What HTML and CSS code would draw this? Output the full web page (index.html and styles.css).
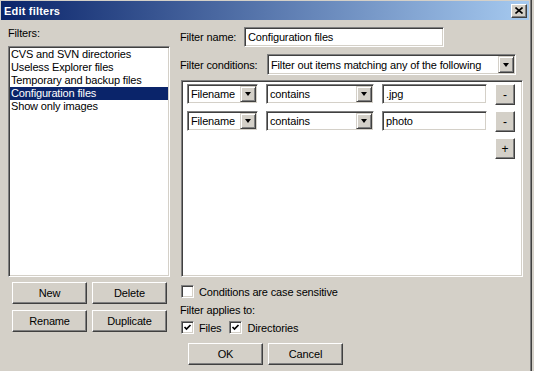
FILE: index.html
```html
<!DOCTYPE html>
<html lang="en">
<head>
  <meta charset="UTF-8" />
  <title>Edit filters</title>
  <link rel="stylesheet" href="styles.css">
</head>
<body>
  <div class="window">
    <!-- Title bar -->
    <div class="titlebar">
      <span class="title">Edit filters</span>
      <div class="close">
        <svg width="8" height="7" viewBox="0 0 8 7"><path d="M0.5 0.5 L7.5 6.5 M7.5 0.5 L0.5 6.5" stroke="#000" stroke-width="1.6"/></svg>
      </div>
    </div>

    <div class="content">
      <!-- Left column: list of filters -->
      <div class="left">
        <div class="label">Filters:</div>
        <div class="listbox">
          <div class="item">CVS and SVN directories</div>
          <div class="item">Useless Explorer files</div>
          <div class="item">Temporary and backup files</div>
          <div class="item selected">Configuration files</div>
          <div class="item">Show only images</div>
        </div>
        <div class="btn-grid">
          <div class="btn">New</div>
          <div class="btn">Delete</div>
          <div class="btn">Rename</div>
          <div class="btn">Duplicate</div>
        </div>
      </div>

      <!-- Right column: filter details -->
      <div class="right">
        <div class="form-row">
          <div class="form-label name-label">Filter name:</div>
          <div class="field name-field">Configuration files</div>
        </div>
        <div class="form-row cond-row">
          <div class="form-label cond-label">Filter conditions:</div>
          <div class="field combo cond-combo">
            <span>Filter out items matching any of the following</span>
            <div class="drop"><i></i></div>
          </div>
        </div>

        <div class="conditions">
          <div class="cond">
            <div class="field combo type-combo"><span>Filename</span><div class="drop"><i></i></div></div>
            <div class="field combo op-combo"><span>contains</span><div class="drop"><i></i></div></div>
            <div class="field value">.jpg</div>
            <div class="btn small">-</div>
          </div>
          <div class="cond">
            <div class="field combo type-combo"><span>Filename</span><div class="drop"><i></i></div></div>
            <div class="field combo op-combo"><span>contains</span><div class="drop"><i></i></div></div>
            <div class="field value">photo</div>
            <div class="btn small">-</div>
          </div>
          <div class="cond add-row">
            <div class="btn small">+</div>
          </div>
        </div>

        <div class="check-row case-row">
          <div class="checkbox"></div>
          <span>Conditions are case sensitive</span>
        </div>
        <div class="applies">Filter applies to:</div>
        <div class="check-row applies-row">
          <div class="checkbox checked">
            <svg width="9" height="9" viewBox="0 0 9 9"><path d="M1.5 4 L3.5 6 L7.5 2" fill="none" stroke="#000" stroke-width="1.7"/></svg>
          </div>
          <span>Files</span>
          <div class="checkbox checked">
            <svg width="9" height="9" viewBox="0 0 9 9"><path d="M1.5 4 L3.5 6 L7.5 2" fill="none" stroke="#000" stroke-width="1.7"/></svg>
          </div>
          <span>Directories</span>
        </div>

        <div class="dialog-buttons">
          <div class="btn">OK</div>
          <div class="btn">Cancel</div>
        </div>
      </div>
    </div>
  </div>
</body>
</html>
```

FILE: styles.css
```css
* {
  box-sizing: border-box;
}
body {
  margin: 0;
  font-family: "Liberation Sans", Arial, sans-serif;
  font-size: 11px;
  letter-spacing: -0.15px;
  color: #000;
  background-color: #d4d0c8;
  overflow: hidden;
}
/* Dialog window frame */
.window {
  width: 532px;
  height: 371px;
  padding: 1px 2px 0 1px;
  border-right: 1px solid #404040;
  box-shadow: inset -1px 0 #808080;
  background-color: #d4d0c8;
}
.titlebar {
  height: 19px;
  display: flex;
  align-items: center;
  justify-content: space-between;
  padding: 0 2px 0 3px;
  background: linear-gradient(to right, #0a246a, #a6caf0);
}
.title {
  color: #fff;
  font-weight: bold;
  font-size: 11px;
  letter-spacing: 0.2px;
}
.close {
  width: 16px;
  height: 14px;
  display: flex;
  align-items: center;
  justify-content: center;
  background-color: #d4d0c8;
  border: 1px solid;
  border-color: #fff #404040 #404040 #fff;
  box-shadow: inset -1px -1px #808080;
}
.content {
  display: flex;
  padding: 7px 0 0 7px;
}
/* Left column */
.left {
  width: 162px;
}
.label {
  line-height: 13px;
}
.listbox {
  margin-top: 6px;
  height: 231px;
  background-color: #fff;
  border: 1px solid;
  border-color: #808080 #fff #fff #808080;
  box-shadow: inset 1px 1px #404040, inset -1px -1px #d4d0c8;
  padding: 1px;
}
.item {
  height: 13px;
  line-height: 13px;
  padding-left: 1px;
  white-space: nowrap;
}
.item.selected {
  background-color: #0a246a;
  color: #fff;
}
.btn-grid {
  margin-top: 5px;
  padding-left: 4px;
  display: grid;
  grid-template-columns: 75px 75px;
  grid-auto-rows: 22px;
  column-gap: 5px;
  row-gap: 6px;
}
/* Raised 3D button */
.btn {
  display: flex;
  align-items: center;
  justify-content: center;
  background-color: #d4d0c8;
  border: 1px solid;
  border-color: #fff #404040 #404040 #fff;
  box-shadow: inset -1px -1px #808080;
}
/* Right column */
.right {
  margin-left: 10px;
  width: 343px;
}
.form-row {
  display: flex;
  align-items: center;
}
.name-label {
  width: 64px;
}
.cond-label {
  width: 87px;
}
.cond-row {
  margin-top: 7px;
}
/* Sunken text field */
.field {
  height: 20px;
  display: flex;
  align-items: center;
  padding-left: 3px;
  background-color: #fff;
  border: 1px solid;
  border-color: #808080 #fff #fff #808080;
  box-shadow: inset 1px 1px #404040, inset -1px -1px #d4d0c8;
  white-space: nowrap;
  overflow: hidden;
}
.name-field {
  width: 200px;
  height: 20px;
}
.combo {
  justify-content: space-between;
  padding-right: 1px;
}
.cond-combo {
  width: 249px;
  height: 21px;
}
.drop {
  width: 16px;
  height: calc(100% - 2px);
  display: flex;
  align-items: center;
  justify-content: center;
  background-color: #d4d0c8;
  border: 1px solid;
  border-color: #d4d0c8 #404040 #404040 #d4d0c8;
  box-shadow: inset 1px 1px #fff, inset -1px -1px #808080;
}
.drop i {
  width: 0;
  height: 0;
  border-left: 3.5px solid transparent;
  border-right: 3.5px solid transparent;
  border-top: 4px solid #000;
}
/* Conditions panel */
.conditions {
  margin-top: 5px;
  margin-left: 1px;
  width: 342px;
  height: 197px;
  background-color: #fff;
  border: 1px solid;
  border-color: #808080 #fff #fff #808080;
  box-shadow: inset 1px 1px #404040, inset -1px -1px #d4d0c8;
  padding: 3px 0 0 5px;
}
.cond {
  display: flex;
  gap: 8px;
  height: 20px;
  margin-bottom: 7px;
}
.type-combo {
  width: 71px;
}
.op-combo {
  width: 108px;
}
.value {
  width: 105px;
}
.btn.small {
  width: 20px;
  height: 21px;
  font-size: 12px;
}
.add-row {
  padding-left: 308px;
}
/* Checkboxes */
.check-row {
  display: flex;
  align-items: center;
  height: 13px;
  padding-left: 1px;
}
.case-row {
  margin-top: 8px;
}
.checkbox {
  width: 13px;
  height: 13px;
  margin-right: 5px;
  display: flex;
  align-items: center;
  justify-content: center;
  background-color: #fff;
  border: 1px solid;
  border-color: #808080 #fff #fff #808080;
  box-shadow: inset 1px 1px #404040, inset -1px -1px #d4d0c8;
}
.applies {
  margin-top: 6px;
  line-height: 13px;
}
.applies-row {
  margin-top: 4px;
}
.applies-row span {
  margin-right: 8px;
}
.dialog-buttons {
  margin-top: 9px;
  margin-left: 8px;
  display: flex;
  gap: 5px;
}
.dialog-buttons .btn {
  width: 75px;
  height: 22px;
}
```
